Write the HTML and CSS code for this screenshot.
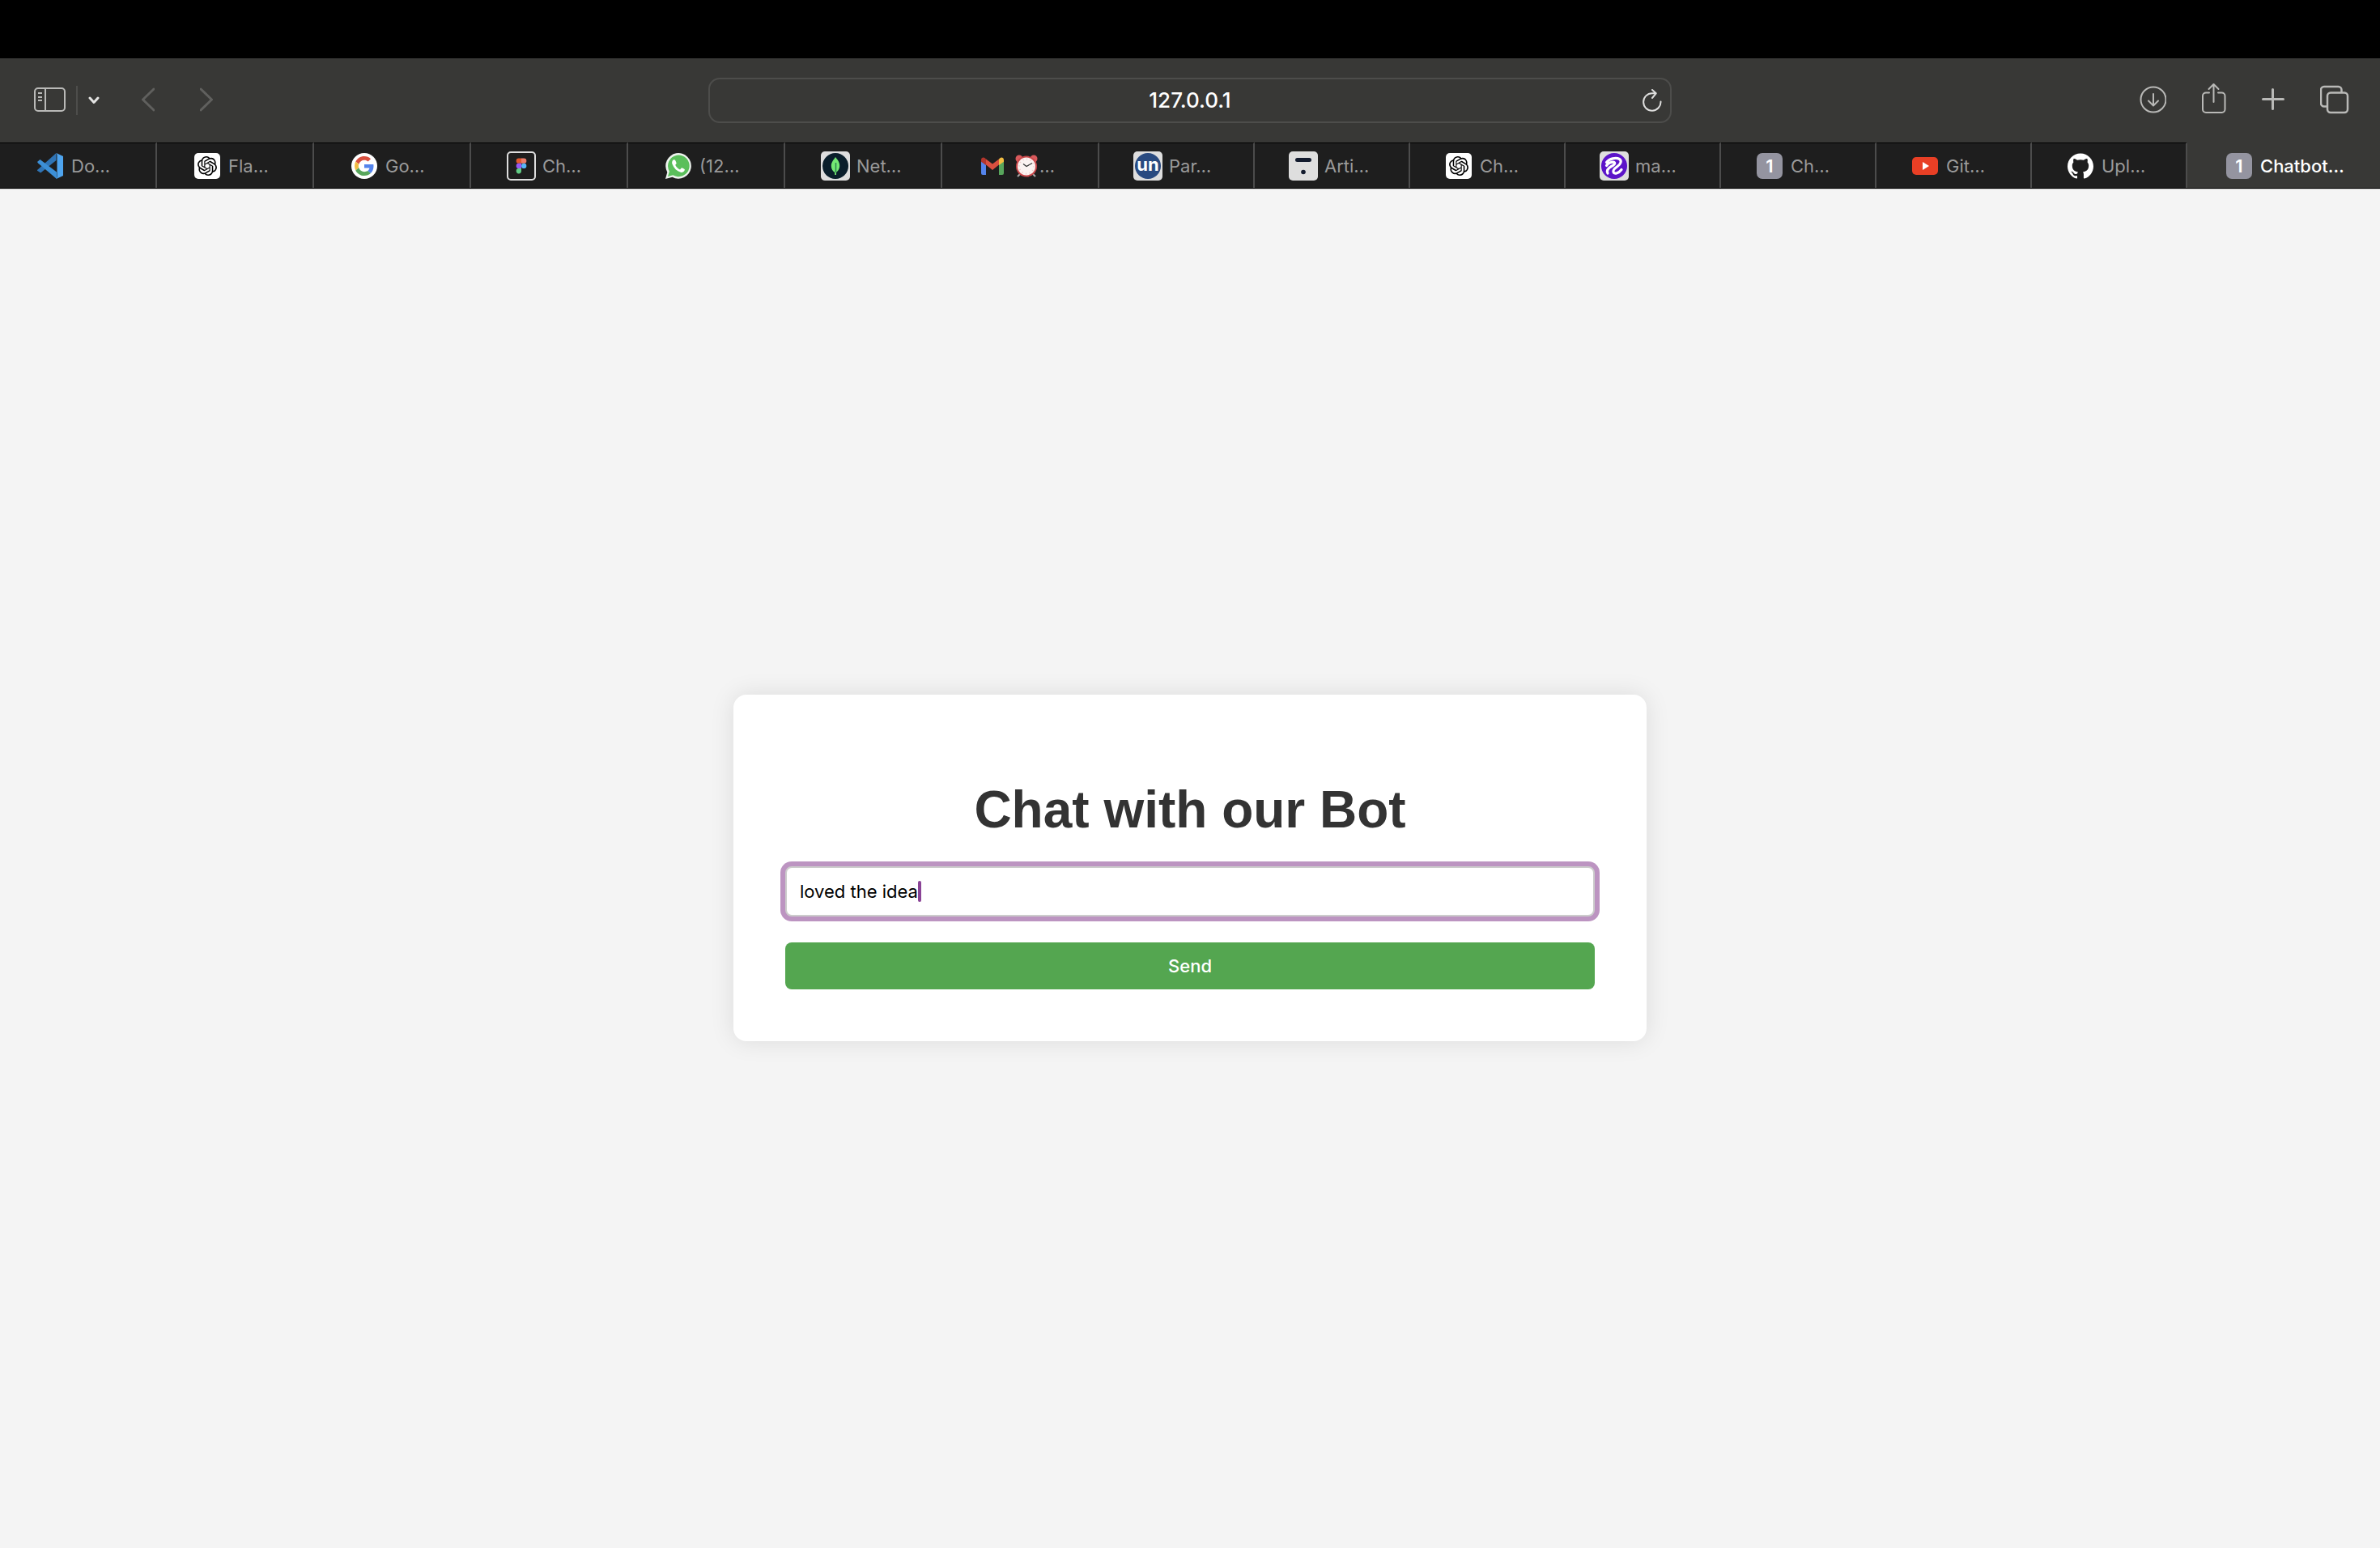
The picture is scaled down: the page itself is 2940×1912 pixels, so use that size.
FILE: index.html
```html
<!DOCTYPE html>
<html lang="en">
<head>
<meta charset="utf-8">
<title>Chatbot</title>
<link rel="stylesheet" href="styles.css">
</head>
<body>
<svg class="defs" aria-hidden="true">
  <symbol id="openai" viewBox="0 0 24 24"><path d="M22.2819 9.8211a5.9847 5.9847 0 0 0-.5157-4.9108 6.0462 6.0462 0 0 0-6.5098-2.9A6.0651 6.0651 0 0 0 4.9807 4.1818a5.9847 5.9847 0 0 0-3.9977 2.9 6.0462 6.0462 0 0 0 .7427 7.0966 5.98 5.98 0 0 0 .511 4.9107 6.051 6.051 0 0 0 6.5146 2.9001A5.9847 5.9847 0 0 0 13.2599 24a6.0557 6.0557 0 0 0 5.7718-4.2058 5.9894 5.9894 0 0 0 3.9977-2.9001 6.0557 6.0557 0 0 0-.7475-7.0729zm-9.022 12.6081a4.4755 4.4755 0 0 1-2.8764-1.0408l.1419-.0804 4.7783-2.7582a.7948.7948 0 0 0 .3927-.6813v-6.7369l2.02 1.1686a.071.071 0 0 1 .038.052v5.5826a4.504 4.504 0 0 1-4.4945 4.4944zm-9.6607-4.1254a4.4708 4.4708 0 0 1-.5346-3.0137l.142.0852 4.783 2.7582a.7712.7712 0 0 0 .7806 0l5.8428-3.3685v2.3324a.0804.0804 0 0 1-.0332.0615L9.74 19.9502a4.4992 4.4992 0 0 1-6.1408-1.6464zM2.3408 7.8956a4.485 4.485 0 0 1 2.3655-1.9728V11.6a.7664.7664 0 0 0 .3879.6765l5.8144 3.3543-2.0201 1.1685a.0757.0757 0 0 1-.071 0l-4.8303-2.7865A4.504 4.504 0 0 1 2.3408 7.872zm16.5963 3.8558L13.1038 8.364 15.1192 7.2a.0757.0757 0 0 1 .071 0l4.8303 2.7913a4.4944 4.4944 0 0 1-.6765 8.1042v-5.6772a.79.79 0 0 0-.407-.667zm2.0107-3.0231l-.142-.0852-4.7735-2.7818a.7759.7759 0 0 0-.7854 0L9.409 9.2297V6.8974a.0662.0662 0 0 1 .0284-.0615l4.8303-2.7866a4.4992 4.4992 0 0 1 6.6802 4.66zM8.3065 12.863l-2.02-1.1638a.0804.0804 0 0 1-.038-.0567V6.0742a4.4992 4.4992 0 0 1 7.3757-3.4537l-.142.0805L8.704 5.459a.7948.7948 0 0 0-.3927.6813zm1.0976-2.3654l2.602-1.4998 2.6069 1.4998v2.9994l-2.5974 1.4997-2.6067-1.4997Z"/></symbol>
</svg>

<div class="menu-strip"></div>

<header class="toolbar">
  <div class="tools tools-left">
    <button class="tool" aria-label="Show sidebar"><svg width="39" height="44" fill="none" stroke="#b9b9b7" stroke-width="2"><rect x="1" y="7" width="37" height="28" rx="4"/><path d="M14 7v28M5 13h5M5 18h5M5 22h5"/></svg></button>
    <span class="divider"></span>
    <button class="tool" aria-label="Tab groups"><svg width="14" height="44" fill="none" stroke="#e4e4e3" stroke-width="3" stroke-linecap="round" stroke-linejoin="round"><path d="M2 19l5 5.500l5-5.500"/></svg></button>
    <button class="tool back" aria-label="Back"><svg width="16" height="44" fill="none" stroke="#60605e" stroke-width="3" stroke-linecap="round" stroke-linejoin="round"><path d="M15 8L1.500 21L15 34"/></svg></button>
    <button class="tool forward" aria-label="Forward"><svg width="16" height="44" fill="none" stroke="#60605e" stroke-width="3" stroke-linecap="round" stroke-linejoin="round"><path d="M1 8L14.500 21L1 34"/></svg></button>
  </div>
  <div class="address">
    <input class="address-input" type="text" value="127.0.0.1" aria-label="Address">
    <button class="tool reload" aria-label="Reload"><svg width="24" height="28" viewBox="0 0 24 28" fill="none" stroke="#dededd" stroke-width="2" stroke-linecap="round" stroke-linejoin="round"><path d="M22.500 15.500A10.700 10.700 0 1 1 12 5.300L16.500 5.300M12 1L16.700 5.300L12 11"/></svg></button>
  </div>
  <div class="tools tools-right">
    <button class="tool" aria-label="Downloads"><svg width="36" height="44" fill="none" stroke="#b9b9b7" stroke-width="2" stroke-linecap="round" stroke-linejoin="round"><circle cx="20" cy="21" r="15.500"/><path d="M20 14v14M14 22.500l6 6l6-6"/></svg></button>
    <button class="tool" aria-label="Share"><svg width="30" height="44" fill="none" stroke="#b9b9b7" stroke-width="2" stroke-linecap="round" stroke-linejoin="round"><path d="M9 12.500H5a4 4 0 0 0-4 4V33a4 4 0 0 0 4 4H24.500a4 4 0 0 0 4-4V16.500a4 4 0 0 0-4-4H20M14.500 24V2.500M8.500 8L14.500 2L20.500 8"/></svg></button>
    <button class="tool" aria-label="New tab"><svg width="28" height="44" fill="none" stroke="#b9b9b7" stroke-width="3" stroke-linecap="round"><path d="M1.500 20.500h25M13.500 8.500v24"/></svg></button>
    <button class="tool" aria-label="Tab overview"><svg width="36" height="44" fill="none" stroke="#b9b9b7" stroke-width="2.500"><path d="M9 29.500H5a4 4 0 0 1-4-4V9a4 4 0 0 1 4-4H22.500a4 4 0 0 1 4 4V12"/><rect x="9" y="12.500" width="25" height="24.500" rx="4"/></svg></button>
  </div>
</header>

<nav class="tabs" aria-label="Open tabs">
  <button class="tab"><svg class="favicon" viewBox="0 0 32 32"><path fill="#2f74b5" d="M0 21L23.500 0V9L4.200 24.500L0 21.800Z"/><path fill="#3c8fd6" d="M0 11L3.500 8L24 23.500V32L1 12.500Z"/><path fill="#4ea4ee" d="M23.500 0L32 4V28L23.500 32Q24.500 31 24.500 29V3Q24.500 1 23.500 0Z"/></svg><span>Do…</span></button>
  <button class="tab"><svg class="favicon" viewBox="0 0 32 32"><rect width="32" height="32" rx="5" fill="#fff"/><use href="#openai" x="4" y="4" width="24" height="24"/></svg><span>Fla…</span></button>
  <button class="tab"><svg class="favicon" viewBox="0 0 32 32"><circle cx="16" cy="16" r="16" fill="#fff"/><svg x="4" y="4" width="24" height="24" viewBox="0 0 48 48"><path fill="#d9503f" d="M24 9.500c3.540 0 6.710 1.220 9.210 3.600l6.850-6.850C35.900 2.380 30.470 0 24 0 14.620 0 6.510 5.380 2.560 13.220l7.980 6.190C12.430 13.720 17.740 9.500 24 9.500z"/><path fill="#5484ec" d="M46.980 24.550c0-1.570-.15-3.090-.38-4.550H24v9.020h12.940c-.58 2.960-2.260 5.480-4.780 7.180l7.730 6c4.510-4.180 7.090-10.360 7.090-17.650z"/><path fill="#f2bd42" d="M10.530 28.590c-.48-1.450-.76-2.990-.76-4.590s.27-3.140.76-4.590l-7.980-6.190C.92 16.460 0 20.120 0 24c0 3.880.92 7.540 2.560 10.780l7.970-6.190z"/><path fill="#58a65c" d="M24 48c6.480 0 11.930-2.130 15.890-5.810l-7.730-6c-2.150 1.450-4.920 2.300-8.160 2.300-6.260 0-11.570-4.220-13.470-9.910l-7.980 6.190C6.510 42.620 14.620 48 24 48z"/></svg></svg><span>Go…</span></button>
  <button class="tab"><svg class="favicon plated" viewBox="0 0 36 36"><rect x="1" y="1" width="34" height="34" rx="4" fill="#1e1e1e" stroke="#dedede" stroke-width="2"/><path fill="#e0592f" d="M18 8.500h-3.200a3.150 3.150 0 0 0 0 6.300H18z"/><path fill="#ee7d6b" d="M18 8.500h3.200a3.150 3.150 0 0 1 0 6.300H18z"/><path fill="#9657f5" d="M18 14.800h-3.200a3.150 3.150 0 0 0 0 6.300H18z"/><circle cx="21.200" cy="17.900" r="3.150" fill="#57b6f7"/><path fill="#62cd85" d="M18 21.100h-3.200a3.150 3.150 0 1 0 3.200 3.150z"/></svg><span>Ch…</span></button>
  <button class="tab"><svg class="favicon" viewBox="0 0 32 32"><path fill="#eef3ee" d="M0 32L2.300 23.700A15.800 15.800 0 1 1 8.500 29.800Z"/><path fill="#5abf5b" d="M3 29L4.900 22.700A13.300 13.300 0 1 1 9.300 27.200Z"/><path fill="#fff" d="M10 8.300C8.200 9.600 7.700 11.600 8.500 13.800C10.600 19 14 22.300 18.800 23.700C21.500 24.500 23.700 22.900 23.900 20.300C22.600 19.100 21.200 18.500 20 18.200L18 20.500C15.300 19.300 13.200 17.200 12.200 14.800L13.700 12.800C13.200 11.200 12.600 9.700 11.900 8.400Z"/></svg><span>(12…</span></button>
  <button class="tab"><svg class="favicon plated" viewBox="0 0 36 36"><rect width="36" height="36" rx="5" fill="#dedede"/><circle cx="18" cy="18" r="16" fill="#0a1e2b"/><path fill="#74e873" d="M18 7C20 10 23.300 12.500 23.200 18C23 22.500 20.500 24.500 19 26V29H17.200V26C15 24.500 12.800 22 12.800 18C12.800 12.500 16.500 10 18 7Z"/><path stroke="#2c8050" stroke-width="1.500" d="M18.500 14V26"/></svg><span>Net…</span></button>
  <button class="tab"><svg class="favicon" viewBox="0 0 32 32"><path fill="#5484ec" d="M2 10L8 14.500V27H4a2 2 0 0 1-2-2Z"/><path fill="#58a65c" d="M24 14.500L30 10V25a2 2 0 0 1-2 2H24Z"/><path fill="#d9503f" d="M8 7.500L16 13.500L24 7.500V14.500L16 21L8 14.500Z"/><path fill="#b2352c" d="M2 10V8.500C2 5.500 5 4.500 7 6.500L8 7.500V15L2 10.800Z"/><path fill="#f2bd42" d="M24 7.500L25 6.500C27 4.500 30 5.500 30 8.500V10.800L24 15Z"/></svg><span class="clock-label"><svg class="clock" viewBox="0 0 28 28" role="img" aria-label="Alarm clock"><path stroke="#aaa" stroke-width="2" d="M6 24L3 27M22 24L25 27"/><circle cx="5" cy="5" r="4.500" fill="#d95a5c"/><circle cx="23" cy="5" r="4.500" fill="#d95a5c"/><circle cx="14" cy="14.500" r="13" fill="#c9474a"/><circle cx="14" cy="14.500" r="11" fill="#fbf3f1"/><circle cx="14" cy="14.500" r="9" fill="none" stroke="#ecc9c9" stroke-width="2" stroke-dasharray="1 3.700"/><path fill="none" stroke="#333" stroke-width="1.200" d="M10 11.500L14 14.500L21 10.500"/></svg>…</span></button>
  <button class="tab tab-narrow"><svg class="favicon plated" viewBox="0 0 36 36"><rect width="36" height="36" rx="5" fill="#dedede"/><circle cx="18" cy="18" r="16" fill="#294a80"/><text class="un-mark" x="18" y="24" text-anchor="middle">un</text></svg><span>Par…</span></button>
  <button class="tab tab-narrow"><svg class="favicon plated" viewBox="0 0 36 36"><rect width="36" height="36" rx="5" fill="#dedede"/><rect x="8" y="8" width="20" height="5" rx="2.500" fill="#131b2e"/><circle cx="18" cy="25.500" r="2.800" fill="#131b2e"/></svg><span>Arti…</span></button>
  <button class="tab tab-narrow"><svg class="favicon" viewBox="0 0 32 32"><rect width="32" height="32" rx="5" fill="#fff"/><use href="#openai" x="4" y="4" width="24" height="24"/></svg><span>Ch…</span></button>
  <button class="tab tab-narrow"><svg class="favicon plated" viewBox="0 0 36 36"><rect width="36" height="36" rx="5" fill="#dedede"/><circle cx="18" cy="18" r="16" fill="#5c14c9"/><path fill="none" stroke="#fff" stroke-width="3.200" stroke-linecap="round" d="M8.500 13.500C12 9 20 7 24.500 9.500C28 12 25.500 16 22 18.500C18.500 21 16 23 17 25.500C18.500 29 24 26.500 27 22.500M8.500 17.500C11 14 16 12.500 18 13.500C19.800 15 17.500 17 14.500 18.500C10 21 8.500 24 10 27"/></svg><span>ma…</span></button>
  <button class="tab tab-narrow"><span class="favicon letter">1</span><span>Ch…</span></button>
  <button class="tab tab-narrow"><svg class="favicon" viewBox="0 0 32 32"><rect y="5" width="32" height="22" rx="5" fill="#e83f25"/><path fill="#fff" d="M13 11L21 16L13 21Z"/></svg><span>Git…</span></button>
  <button class="tab tab-narrow"><svg class="favicon" viewBox="0 0 24 24"><path fill="#fff" d="M12 .297c-6.630 0-12 5.373-12 12 0 5.303 3.438 9.800 8.205 11.385.6.113.82-.258.82-.577 0-.285-.01-1.040-.015-2.040-3.338.724-4.042-1.610-4.042-1.610C4.422 18.070 3.633 17.700 3.633 17.700c-1.087-.744.084-.729.084-.729 1.205.084 1.838 1.236 1.838 1.236 1.070 1.835 2.809 1.305 3.495.998.108-.776.417-1.305.76-1.605-2.665-.3-5.466-1.332-5.466-5.930 0-1.310.465-2.380 1.235-3.220-.135-.303-.54-1.523.105-3.176 0 0 1.005-.322 3.300 1.230.96-.267 1.980-.399 3-.405 1.020.006 2.040.138 3 .405 2.280-1.552 3.285-1.230 3.285-1.230.645 1.653.24 2.873.12 3.176.765.84 1.230 1.910 1.230 3.220 0 4.610-2.805 5.625-5.475 5.920.42.36.81 1.096.81 2.220 0 1.606-.015 2.896-.015 3.286 0 .315.21.690.825.570C20.565 22.092 24 17.592 24 12.297c0-6.627-5.373-12-12-12"/></svg><span>Upl…</span></button>
  <button class="tab tab-active" aria-current="page"><span class="favicon letter">1</span><span>Chatbot…</span></button>
</nav>

<main class="page">
  <form class="card">
    <h1 class="title">Chat with our Bot</h1>
    <div class="field">
      <input class="message" type="text" value="loved the idea" aria-label="Message">
      <span class="caret"></span>
    </div>
    <button class="send" type="button">Send</button>
  </form>
</main>
</body>
</html>
```
FILE: styles.css
```css
* {
  box-sizing: border-box;
}

body {
  display: flex;
  flex-direction: column;
  min-height: 100vh;
  margin: 0;
  background: #f4f4f4;
  font-family: Inter, "Liberation Sans", sans-serif;
}

button {
  border: 0;
  padding: 0;
  background: none;
  font-family: inherit;
}

svg {
  display: block;
  flex: none;
}

.defs {
  position: absolute;
  width: 0;
  height: 0;
}

.menu-strip {
  height: 72px;
  background: #000;
}

.toolbar {
  display: grid;
  grid-template-columns: 1fr minmax(0, 1190px) 1fr;
  align-items: center;
  height: 104px;
  background: #383836;
}

.tools {
  display: flex;
  align-items: center;
}

.tools-left {
  gap: 13px;
  padding-left: 42px;
}

.tools-right {
  justify-content: flex-end;
  gap: 44px;
  padding-right: 38px;
}

.divider {
  width: 2px;
  height: 36px;
  background: #4d4d4b;
}

.back {
  margin-left: 39px;
}

.forward {
  margin-left: 43px;
}

.address {
  display: flex;
  align-items: center;
  height: 56px;
  padding: 0 10px 0 34px;
  border: 2px solid #4d4d4b;
  border-radius: 14px;
}

.address-input {
  flex: 1;
  min-width: 0;
  padding: 0;
  border: 0;
  outline: 0;
  background: none;
  color: #fff;
  font: 500 26px/32px Inter, "Liberation Sans", sans-serif;
  text-align: center;
}

.tabs {
  display: grid;
  grid-template-columns: repeat(7, 194fr) repeat(7, 192fr) 238fr;
  height: 57px;
  border-bottom: 1px solid #000;
}

.tab {
  display: flex;
  align-items: center;
  gap: 10px;
  min-width: 0;
  padding-left: 46px;
  border-top: 1px solid #000;
  border-right: 2px solid #4c4c4c;
  background: #1e1e1e;
  color: #9a9a9a;
  font-size: 22px;
  line-height: 28px;
  white-space: nowrap;
}

.tab-narrow {
  padding-left: 44px;
}

.tab-active {
  padding-left: 48px;
  border-top-color: #383836;
  border-right: 0;
  background: #383836;
  color: #fff;
  font-weight: 500;
}

.favicon {
  flex: none;
  width: 32px;
  height: 32px;
}

.plated {
  width: 36px;
  height: 36px;
  margin: 0 -2px;
}

.letter {
  border-radius: 7px;
  background: #9494a0;
  color: #fff;
  font-size: 22px;
  font-weight: 600;
  line-height: 32px;
  text-align: center;
}

.un-mark {
  fill: #fff;
  font: 700 22px Inter, "Liberation Sans", sans-serif;
}

.clock-label {
  display: flex;
  align-items: center;
}

.clock {
  width: 28px;
  height: 28px;
  margin: 0 2px;
}

.page {
  display: flex;
  flex: 1;
  align-items: center;
  justify-content: center;
  padding-bottom: 2px;
  border-top: 1px solid #d2d2d2;
}

.card {
  width: 100%;
  max-width: 1128px;
  padding: 64px;
  border-radius: 16px;
  background: #fff;
  box-shadow: 0 0 30px rgba(0, 0, 0, 0.1);
}

.title {
  margin: 41px 0 33px;
  color: #333;
  font: 700 64px/74px "Liberation Sans", Arial, sans-serif;
  text-align: center;
}

.field {
  position: relative;
  margin-bottom: 32px;
}

.message {
  display: block;
  width: 100%;
  height: 62px;
  padding: 0 16px;
  border: 2px solid #ccc;
  border-radius: 8px;
  outline: 0;
  background: #fff;
  box-shadow: 0 0 0 6px #bc94c1;
  color: #000;
  font: 400 22px/28px Inter, "Liberation Sans", sans-serif;
}

.caret {
  position: absolute;
  top: 18px;
  left: 164px;
  width: 4px;
  height: 26px;
  border-radius: 2px;
  background: #8a4396;
}

.send {
  display: block;
  width: 100%;
  height: 58px;
  border-radius: 8px;
  background: #54a650;
  color: #fff;
  font-size: 22px;
  font-weight: 500;
  line-height: 28px;
}
```
